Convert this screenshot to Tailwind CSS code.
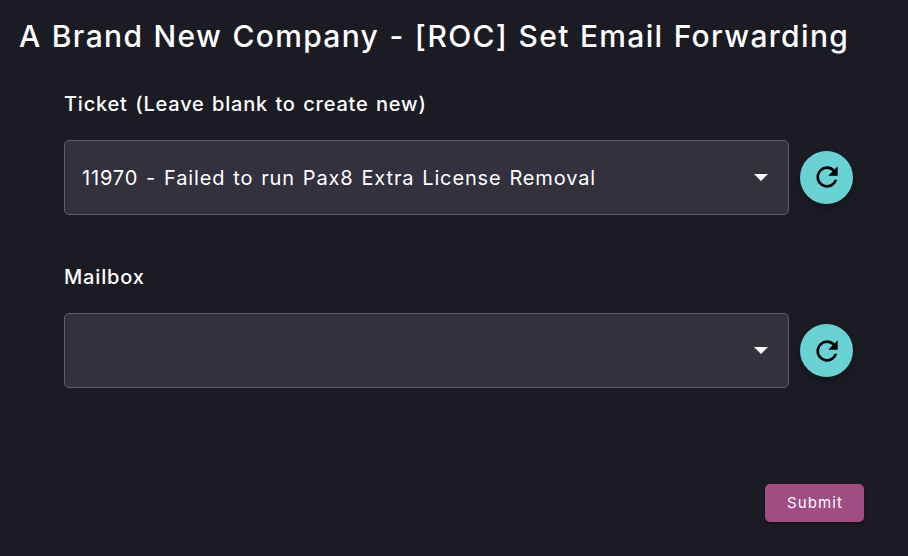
<!DOCTYPE html>
<html lang="en">
<head>
<meta charset="utf-8">
<title>Set Email Forwarding</title>
<script src="https://cdn.jsdelivr.net/npm/@tailwindcss/browser@4"></script>
</head>
<body class="h-[556px] w-[908px] overflow-hidden bg-[#1b1b24] font-[Inter,'Work_Sans',sans-serif] text-white">
<main class="flex h-full flex-col">
  <h1 class="h-[72px] pl-[19px] text-[30px] leading-[73px] font-medium whitespace-nowrap tracking-[1.33px] [word-spacing:0.9px]">A Brand New Company - [ROC] Set Email Forwarding</h1>
  <form class="flex flex-col pl-16">
    <label class="mt-5 h-6 text-[20px] leading-6 font-medium tracking-[0.8px] [word-spacing:1.3px]">Ticket (Leave blank to create new)</label>
    <div class="mt-6 flex h-[75px] items-center gap-[11px]">
      <div class="flex h-[75px] w-[725px] items-center justify-between rounded-[5px] border border-[#5f5f6b] bg-[#32313d] pr-5 pl-[17px]">
        <span class="text-[20px] leading-6 tracking-[0.86px] [word-spacing:1.4px]">11970 - Failed to run Pax8 Extra License Removal</span>
        <svg class="h-[7px] w-[14px]" viewBox="0 0 14 7" fill="white"><path d="M0 0h14L7 7z"/></svg>
      </div>
      <button type="button" class="flex size-[53px] items-center justify-center rounded-full bg-[#69d2d5] shadow-[0_4px_6px_rgba(0,0,0,0.28)]">
        <svg class="size-8 -translate-y-px" viewBox="0 0 24 24" fill="black"><path d="M17.65 6.35A7.96 7.96 0 0 0 12 4a8 8 0 1 0 7.73 10h-2.08A6 6 0 1 1 12 6c1.66 0 3.14.69 4.22 1.78L13 11h7V4z"/></svg>
      </button>
    </div>
    <label class="mt-[50px] h-6 text-[20px] leading-6 font-medium tracking-[0.85px]">Mailbox</label>
    <div class="mt-6 flex h-[75px] items-center gap-[11px]">
      <div class="flex h-[75px] w-[725px] items-center justify-end rounded-[5px] border border-[#5f5f6b] bg-[#32313d] pr-5 pl-[17px]">
        <svg class="h-[7px] w-[14px]" viewBox="0 0 14 7" fill="white"><path d="M0 0h14L7 7z"/></svg>
      </div>
      <button type="button" class="flex size-[53px] items-center justify-center rounded-full bg-[#69d2d5] shadow-[0_4px_6px_rgba(0,0,0,0.28)]">
        <svg class="size-8" viewBox="0 0 24 24" fill="black"><path d="M17.65 6.35A7.96 7.96 0 0 0 12 4a8 8 0 1 0 7.73 10h-2.08A6 6 0 1 1 12 6c1.66 0 3.14.69 4.22 1.78L13 11h7V4z"/></svg>
      </button>
    </div>
    <div class="mt-24 flex justify-end pr-11">
      <button type="button" class="h-[38px] w-[99px] rounded-[5px] bg-[#a04d84] pl-px text-[15px] tracking-[1.1px] shadow-[0_2px_3px_rgba(0,0,0,0.35)]">Submit</button>
    </div>
  </form>
</main>
</body>
</html>
